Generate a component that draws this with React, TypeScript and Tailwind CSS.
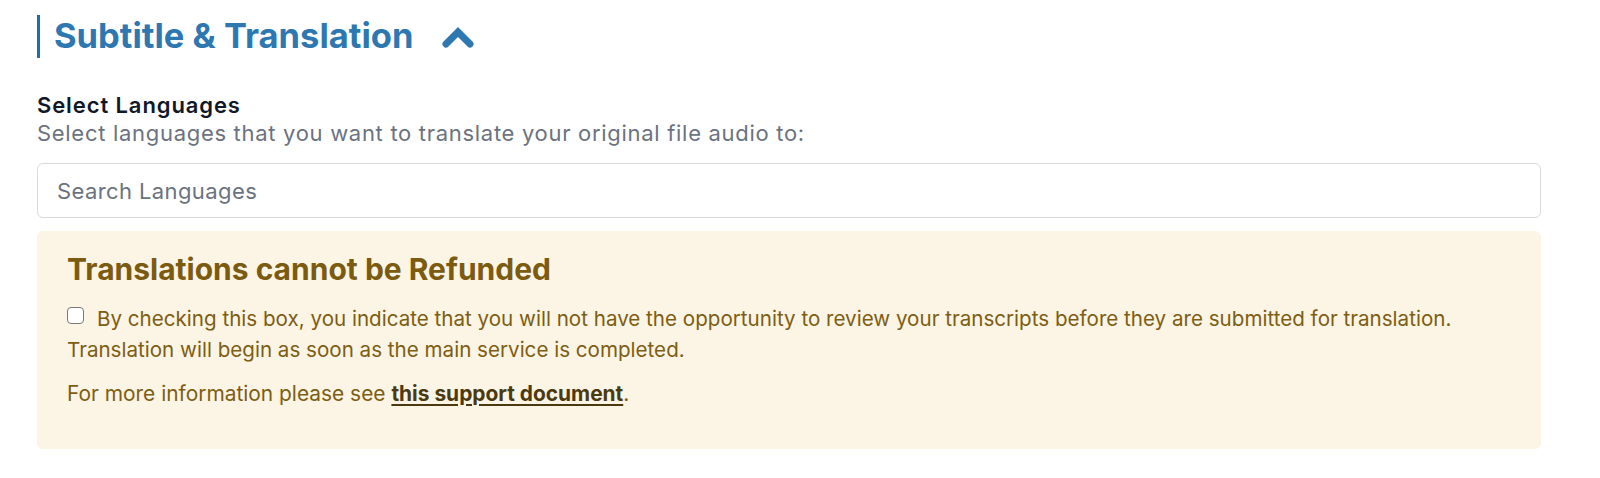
import React from 'react';

const ChevronUp = () => (
  <svg width="32" height="21" viewBox="0 0 32 21" className="ml-[29px] mt-[1px] shrink-0">
    <polyline
      points="4,17 16,5 28,17"
      fill="none"
      stroke="#2e78b2"
      strokeWidth="7"
      strokeLinecap="round"
      strokeLinejoin="miter"
    />
  </svg>
);

const App = () => {
  const [agreed, setAgreed] = React.useState(false);

  return (
    <div className="min-h-[478px] bg-white font-['Inter','Liberation_Sans',sans-serif] pl-[37px] pr-[59px] pt-[15px]">
      {/* Section header */}
      <div className="flex items-center h-[43px] border-l-[3px] border-[#1f6fae] pl-[14px]">
        <h2 className="text-[34.5px] font-bold leading-none text-[#2e78b2]">
          Subtitle &amp; Translation
        </h2>
        <ChevronUp />
      </div>

      {/* Language picker */}
      <div className="mt-[33px]">
        <div className="text-[22px] leading-[28px] font-semibold tracking-[0.9px] text-[#111827]">Select Languages</div>
        <div className="text-[22px] leading-[28px] tracking-[0.7px] text-[#6b7280]">
          Select languages that you want to translate your original file audio to:
        </div>
        <input
          type="text"
          placeholder="Search Languages"
          className="mt-[16px] block w-full h-[55px] rounded-[6px] border border-[#d7dbe0] px-[19px] text-[22px] tracking-[0.4px] text-gray-700 placeholder:text-[#6b7280] outline-none"
        />
      </div>

      {/* Refund warning */}
      <div className="mt-[13px] h-[218px] rounded-[6px] bg-[#fcf4e5] px-[30px] pt-[20px] text-[#7d5e12]">
        <h3 className="text-[30px] leading-[36px] font-bold text-[#7a5b10]">Translations cannot be Refunded</h3>
        <label className="mt-[16px] block text-[20.6px] leading-[31px]">
          <input
            type="checkbox"
            checked={agreed}
            onChange={e => setAgreed(e.target.checked)}
            className="mr-[13px] h-[17px] w-[17px] align-[2px] appearance-none rounded-[4px] border border-[#7a7a7a] bg-white checked:bg-[#2e78b2] checked:border-[#2e78b2]"
          />
          By checking this box, you indicate that you will not have the opportunity to review your transcripts before they are submitted for translation. Translation will begin as soon as the main service is completed.
        </label>
        <p className="mt-[14px] text-[20.9px] leading-[30px]">
          For more information please see{' '}
          <a href="#" className="font-bold text-[#4b3a0f] underline underline-offset-[3px]">
            this support document
          </a>
          .
        </p>
      </div>
    </div>
  );
};

export default App;
